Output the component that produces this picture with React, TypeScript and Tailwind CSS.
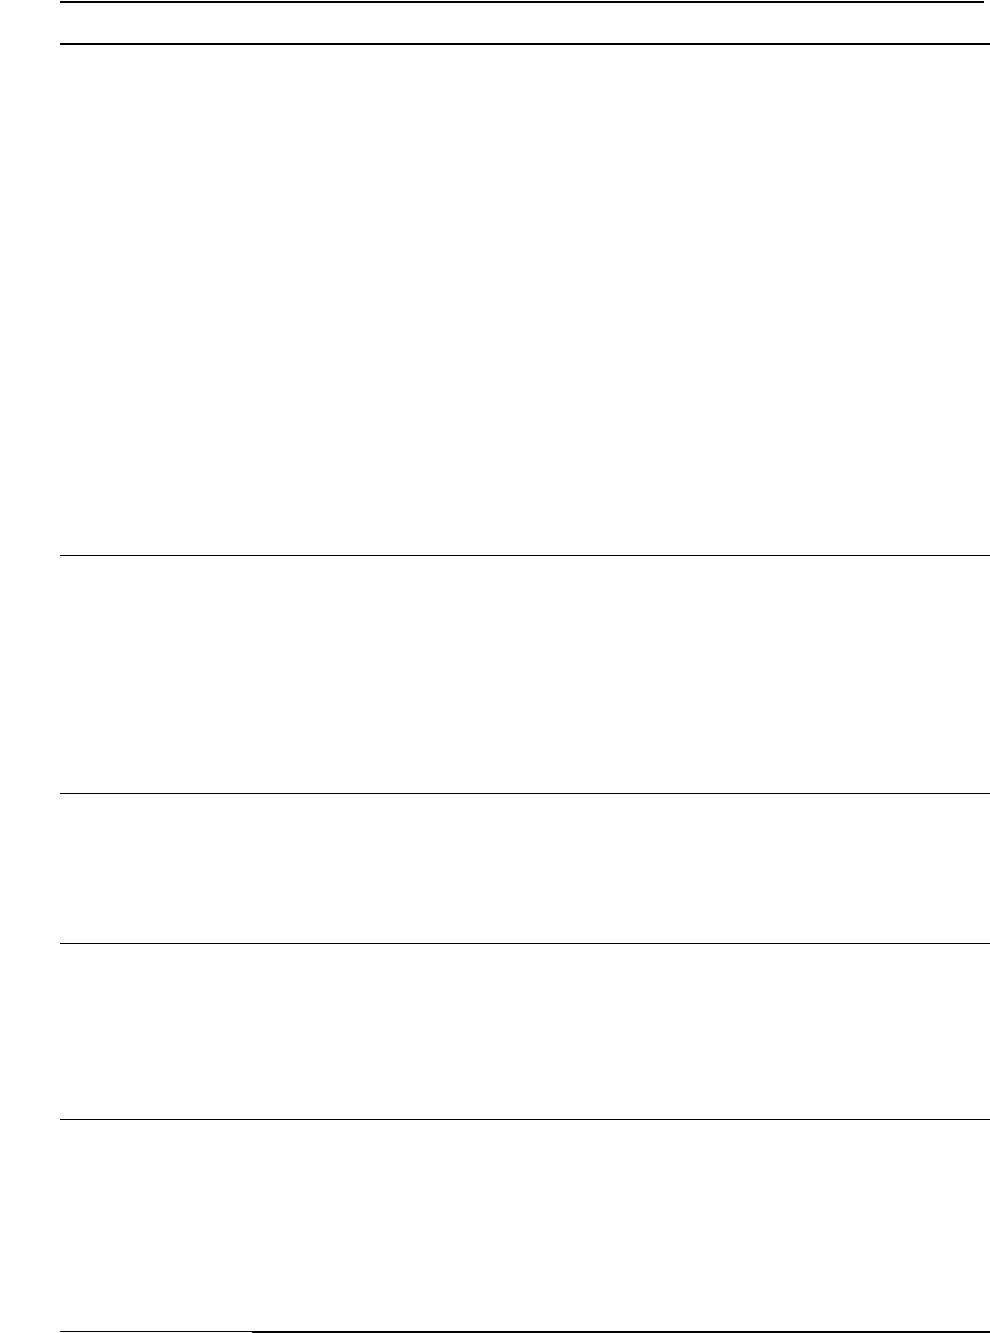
import React from "react";

const rows = [510, 237, 149, 175, 211];

export default function App() {
  return (
    <div className="min-h-[1333px] w-[990px] overflow-hidden bg-white pl-[60px] pt-px font-['Liberation_Serif',serif] text-black">
      {/* top rule */}
      <div className="h-[2px] w-[924px] bg-black" />
      {/* empty header row */}
      <div className="h-[40px]" />
      <div className="h-[2px] w-[930px] bg-black" />
      {/* body rows */}
      {rows.map((h, i) => (
        <div
          key={i}
          className={i < rows.length - 1 ? "w-[930px] border-b border-black" : "w-[930px]"}
          style={{ height: i < rows.length - 1 ? h + 1 : h }}
        />
      ))}
      {/* bottom rule */}
      <div className="flex w-[930px] items-start">
        <div className="h-px w-[192px] bg-black" />
        <div className="h-[2px] flex-1 bg-black" />
      </div>
    </div>
  );
}
